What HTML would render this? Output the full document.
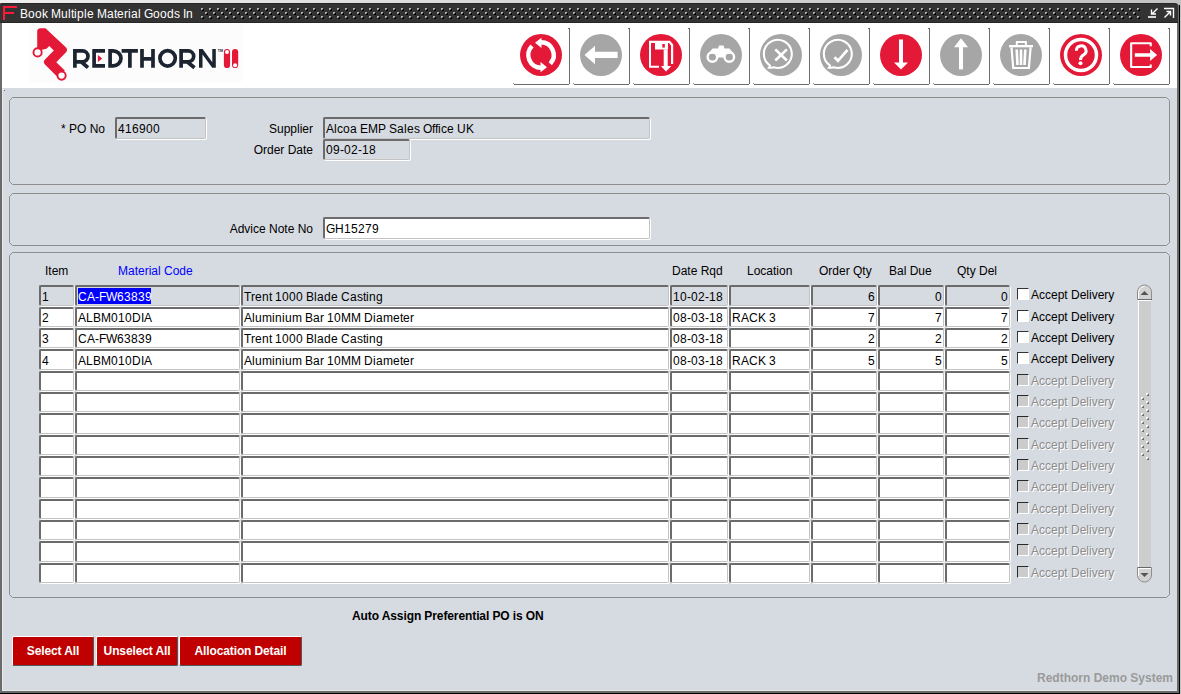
<!DOCTYPE html>
<html><head><meta charset="utf-8"><title>Book Multiple Material Goods In</title><style>
*{margin:0;padding:0;box-sizing:border-box}
html,body{width:1181px;height:694px;overflow:hidden}
body{position:relative;background:#c4c4c4;font-family:"Liberation Sans",sans-serif;font-size:12px;color:#000}
.a{position:absolute}
.t{position:absolute;white-space:nowrap;line-height:14px;height:14px}
.t i{display:inline-block;font-style:normal;overflow:visible}
.cell{position:absolute;border-top:2px solid #6b6b6b;border-left:2px solid #6b6b6b;border-right:1px solid #c3c3c3;border-bottom:1px solid #c3c3c3;border-radius:2px;box-shadow:1px 1px 0 #fff;background:#fff}
.cell.g{background:#d6dae1}
.fld{position:absolute;border-top:2px solid #6b6b6b;border-left:2px solid #6b6b6b;border-right:1px solid #c3c3c3;border-bottom:1px solid #c3c3c3;border-radius:2px;box-shadow:1px 1px 0 #fff;background:#fff}
.fld.g{background:#d6dae1}
.panel{position:absolute;border:1px solid #8e8e8e;border-radius:4px}
.cb{position:absolute;width:12px;height:12px;border-top:1px solid #333;border-left:1px solid #333;border-right:1px solid #fff;border-bottom:1px solid #fff;background:#fff}
.cb.d{background:#cbcbcb;border-top-color:#2a2a2a;border-left-color:#2a2a2a}
.dl{color:#8c8c8c;text-shadow:1px 1px 0 #fff}
.btn{position:absolute;height:30px;background:#c00000;border-top:1px solid #fff;border-left:1px solid #fff;border-right:1px solid #505a5a;border-bottom:1px solid #505a5a;border-radius:2px;color:#fff;font-weight:bold;text-align:center;line-height:29px;letter-spacing:-0.12px}
.tb{position:absolute;top:28px;width:57px;height:57px;border-right:1px solid #8a8a8a;border-bottom:1px solid #707070;border-bottom-right-radius:2px}
</style></head><body>
<div class="a" style="left:0;top:0;width:1181px;height:3px;background:linear-gradient(90deg,#eeeeee,#d6d6d6 50%,#c2c2c2)"></div>
<div class="a" style="left:0;top:3px;width:1179px;height:690px;background:#6a6a6a;border-top-right-radius:4px"></div>
<div class="a" style="left:1179px;top:5px;width:1px;height:689px;background:#000"></div>
<div class="a" style="left:0;top:693px;width:1180px;height:1px;background:#000"></div>
<div class="a" style="left:0;top:3px;width:1178px;height:20px;background:#333;border-top:1px solid #262626;border-bottom:1px solid #262626;border-top-left-radius:3px;border-top-right-radius:4px"></div>
<div class="a" style="left:2px;top:23px;width:1175px;height:668px;background:#d6dae1;border-left:1px solid #e6e8ec;border-bottom:1px solid #e6e8ec"></div>
<div class="a" style="left:2px;top:23px;width:1175px;height:65px;background:#fff"></div>
<svg class="a" style="left:0;top:0" width="1181" height="23"><path d="M3,6 H17 V8 H5 V12 H14 V14 H5 V20 H3 Z" fill="#ff1a3c"/><defs><pattern id="dots" x="1" y="0" width="8" height="8" patternUnits="userSpaceOnUse"><path d="M0,0 h2 v1 h-1 v1 h-1 z" fill="#b4b4b4"/><rect x="1" y="1" width="1" height="1" fill="#6a6a6a"/><path d="M2,1 h1 v2 h-2 v-1 h1 z" fill="#000"/><path d="M4,4 h2 v1 h-1 v1 h-1 z" fill="#b4b4b4"/><rect x="5" y="5" width="1" height="1" fill="#6a6a6a"/><path d="M6,5 h1 v2 h-2 v-1 h1 z" fill="#000"/></pattern></defs><rect x="201" y="8" width="940" height="11" fill="url(#dots)"/><path d="M1148,17 H1156" stroke="#fff" stroke-width="1.6"/><path d="M1157.5,8.5 L1151.5,14.5 M1151.5,9.5 V14 H1156" stroke="#fff" stroke-width="1.4" fill="none"/><path d="M1164,8.5 H1173.5 V18" stroke="#fff" stroke-width="1.4" fill="none"/><path d="M1164.5,17.5 L1170.5,11.5 M1166.5,11.5 H1170.5 V15.5" stroke="#fff" stroke-width="1.4" fill="none"/></svg>
<div class="t " style="left:20px;top:7px;color:#fff"><i style="width:8px">B</i><i style="width:7px">o</i><i style="width:7px">o</i><i style="width:6px">k</i><i style="width:3px">&nbsp;</i><i style="width:10px">M</i><i style="width:7px">u</i><i style="width:3px">l</i><i style="width:3px">t</i><i style="width:3px">i</i><i style="width:7px">p</i><i style="width:3px">l</i><i style="width:7px">e</i><i style="width:3px">&nbsp;</i><i style="width:10px">M</i><i style="width:7px">a</i><i style="width:3px">t</i><i style="width:7px">e</i><i style="width:4px">r</i><i style="width:3px">i</i><i style="width:7px">a</i><i style="width:3px">l</i><i style="width:3px">&nbsp;</i><i style="width:9px">G</i><i style="width:7px">o</i><i style="width:7px">o</i><i style="width:7px">d</i><i style="width:6px">s</i><i style="width:3px">&nbsp;</i><i style="width:3px">I</i><i style="width:7px">n</i></div>
<div class="a" style="left:29px;top:24px;width:213px;height:58px;background:#fcfcfd"></div>
<svg class="a" style="left:0;top:0" width="260" height="88"><path fill="#e31937" d="M37.2,31.5 Q37.2,28.2 40.5,28.2 L45.5,28.2 L65.8,47.2 Q68.3,49.9 65.8,52.6 L56.3,62.2 L64.8,70.6 L58,77.5 L45,64.6 Q42.6,62 45,59.5 L53.8,50.6 L49.3,46 L46.5,48.7 L41,50 L37.2,48 Z"/><circle cx="37.6" cy="52.4" r="4.1" fill="#fff" stroke="#e31937" stroke-width="1.9"/><circle cx="61.6" cy="75.6" r="4.1" fill="#fff" stroke="#e31937" stroke-width="1.9"/><g fill="none" stroke="#1b2430" stroke-width="3.7"><path d="M74.9,49 V67.7 M74.9,50.85 H82.5 A5.5,5.5 0 0 1 82.5,61.85 H74.9 M81.5,62 L88,67.7"/><path d="M94.1,49 V67.7 M92.3,50.85 H105 M92.3,65.85 H105"/><path d="M110.1,49 V67.7 M108.3,50.85 H113.2 A7.8,7.5 0 0 1 113.2,65.85 H108.3"/><path d="M121.6,50.85 H137.9 M129.9,49 V67.7"/><path d="M142,49 V67.7 M153,49 V67.7 M142,58.8 H153"/><circle cx="167.6" cy="58.35" r="7.7"/><path d="M181.1,49 V67.7 M181.1,50.85 H188.2 A5.5,5.5 0 0 1 188.2,61.85 H181.1 M187.5,62 L194.5,67.7"/></g><path fill="#1b2430" d="M199,49 H202.7 L212.3,62.3 V49 H215.8 V67.7 H212.2 L202.5,54.4 V67.7 H199 Z"/><path fill="#e31937" d="M97.9,55 L102.2,58.5 L97.9,62.1 Z"/><text x="217.8" y="51.5" font-family="Liberation Sans" font-weight="bold" font-size="3.6" fill="#1b2430">TM</text><rect x="223.9" y="49" width="6.2" height="19" rx="3.1" fill="#e31937"/><rect x="232" y="49" width="6.2" height="19" rx="3.1" fill="#e31937"/><circle cx="227" cy="51.9" r="2" fill="#fff"/><circle cx="235.1" cy="65.2" r="2" fill="#fff"/></svg>
<svg class="a" style="left:0;top:0" width="1181" height="88"><rect x="569" y="29" width="1" height="55" fill="#6b6b6b"/><rect x="568" y="28" width="2" height="1" fill="#6b6b6b"/><rect x="514" y="84" width="55" height="1" fill="#6b6b6b"/><rect x="513" y="83" width="1" height="1" fill="#8a8a8a"/><rect x="629" y="29" width="1" height="55" fill="#6b6b6b"/><rect x="628" y="28" width="2" height="1" fill="#6b6b6b"/><rect x="574" y="84" width="55" height="1" fill="#6b6b6b"/><rect x="573" y="83" width="1" height="1" fill="#8a8a8a"/><rect x="689" y="29" width="1" height="55" fill="#6b6b6b"/><rect x="688" y="28" width="2" height="1" fill="#6b6b6b"/><rect x="634" y="84" width="55" height="1" fill="#6b6b6b"/><rect x="633" y="83" width="1" height="1" fill="#8a8a8a"/><rect x="749" y="29" width="1" height="55" fill="#6b6b6b"/><rect x="748" y="28" width="2" height="1" fill="#6b6b6b"/><rect x="694" y="84" width="55" height="1" fill="#6b6b6b"/><rect x="693" y="83" width="1" height="1" fill="#8a8a8a"/><rect x="809" y="29" width="1" height="55" fill="#6b6b6b"/><rect x="808" y="28" width="2" height="1" fill="#6b6b6b"/><rect x="754" y="84" width="55" height="1" fill="#6b6b6b"/><rect x="753" y="83" width="1" height="1" fill="#8a8a8a"/><rect x="869" y="29" width="1" height="55" fill="#6b6b6b"/><rect x="868" y="28" width="2" height="1" fill="#6b6b6b"/><rect x="814" y="84" width="55" height="1" fill="#6b6b6b"/><rect x="813" y="83" width="1" height="1" fill="#8a8a8a"/><rect x="929" y="29" width="1" height="55" fill="#6b6b6b"/><rect x="928" y="28" width="2" height="1" fill="#6b6b6b"/><rect x="874" y="84" width="55" height="1" fill="#6b6b6b"/><rect x="873" y="83" width="1" height="1" fill="#8a8a8a"/><rect x="989" y="29" width="1" height="55" fill="#6b6b6b"/><rect x="988" y="28" width="2" height="1" fill="#6b6b6b"/><rect x="934" y="84" width="55" height="1" fill="#6b6b6b"/><rect x="933" y="83" width="1" height="1" fill="#8a8a8a"/><rect x="1049" y="29" width="1" height="55" fill="#6b6b6b"/><rect x="1048" y="28" width="2" height="1" fill="#6b6b6b"/><rect x="994" y="84" width="55" height="1" fill="#6b6b6b"/><rect x="993" y="83" width="1" height="1" fill="#8a8a8a"/><rect x="1109" y="29" width="1" height="55" fill="#6b6b6b"/><rect x="1108" y="28" width="2" height="1" fill="#6b6b6b"/><rect x="1054" y="84" width="55" height="1" fill="#6b6b6b"/><rect x="1053" y="83" width="1" height="1" fill="#8a8a8a"/><rect x="1169" y="29" width="1" height="55" fill="#6b6b6b"/><rect x="1168" y="28" width="2" height="1" fill="#6b6b6b"/><rect x="1114" y="84" width="55" height="1" fill="#6b6b6b"/><rect x="1113" y="83" width="1" height="1" fill="#8a8a8a"/></svg>
<svg class="a" style="left:520px;top:34px" width="42" height="42" viewBox="-21 -21 42 42"><circle r="21" fill="#e31937"/><path d="M0,-12.7 A12.7,12.7 0 0 1 9.29,8.66" stroke="#fff" stroke-width="4.5" fill="none"/><path d="M0.5,-17.3 V-7.1 L-6,-12.2 Z" fill="#fff"/><path d="M-8.98,-8.98 A12.7,12.7 0 0 0 0,12.7" stroke="#fff" stroke-width="4.5" fill="none"/><path d="M-0.5,7.1 V17.3 L6,12.2 Z" fill="#fff"/></svg>
<svg class="a" style="left:580px;top:34px" width="42" height="42" viewBox="-21 -21 42 42"><circle r="21" fill="#a6a6a6"/><path d="M-16.5,0 L-6,-9.3 V-3.3 H16.6 V3 H-6 V9.3 Z" fill="#fff"/></svg>
<svg class="a" style="left:640px;top:34px" width="42" height="42" viewBox="-21 -21 42 42"><circle r="21" fill="#e31937"/><path d="M-12,-14.2 H9 L12.2,-10.6 V9 H10 V-9.6 L8,-12 H-10 V10.8 H-2 V12.8 H-12 Z" fill="#fff"/><path d="M-6,-12 H7 V-5.5 H-6 Z" fill="#fff"/><rect x="1.3" y="-11" width="2.5" height="3.6" fill="#e31937"/><rect x="2.7" y="-5.6" width="4" height="16.8" fill="#fff"/><path d="M-0.1,11 H10.3 L5,16.4 Z" fill="#fff"/></svg>
<svg class="a" style="left:700px;top:34px" width="42" height="42" viewBox="-21 -21 42 42"><circle r="21" fill="#a6a6a6"/><circle cx="-8.6" cy="2" r="4.8" stroke="#fff" stroke-width="2.4" fill="none"/><circle cx="8.3" cy="2" r="4.8" stroke="#fff" stroke-width="2.4" fill="none"/><path d="M-12.5,-1.5 L-8.5,-6.6 H-3 L-2,-9.5 H2.5 L3.5,-6.6 H8.5 L12.5,-1.5 L3,-1 V2.4 H-3 V-1 Z" fill="#fff"/></svg>
<svg class="a" style="left:760px;top:34px" width="42" height="42" viewBox="-21 -21 42 42"><circle r="21" fill="#a6a6a6"/><path d="M-11,10.5 A14,14 0 1 1 -7.5,12.2 Q-10,13 -12,12.7 Q-11,11.5 -11,10.5 Z" stroke="#fff" stroke-width="2.1" fill="none"/><path d="M-5.7,-5.6 L5.9,5.5 M5.9,-5.6 L-5.7,5.5" stroke="#fff" stroke-width="2.6"/></svg>
<svg class="a" style="left:820px;top:34px" width="42" height="42" viewBox="-21 -21 42 42"><circle r="21" fill="#a6a6a6"/><path d="M-11,10.5 A14,14 0 1 1 -7.5,12.2 Q-10,13 -12,12.7 Q-11,11.5 -11,10.5 Z" stroke="#fff" stroke-width="2.1" fill="none"/><path d="M-6.5,2.2 L-3,5.8 L6.5,-5.2" stroke="#fff" stroke-width="2.8" fill="none"/></svg>
<svg class="a" style="left:880px;top:34px" width="42" height="42" viewBox="-21 -21 42 42"><circle r="21" fill="#e31937"/><rect x="-2" y="-15.5" width="4" height="24" fill="#fff"/><path d="M-7,7.5 H7 L0,14.4 Z" fill="#fff"/></svg>
<svg class="a" style="left:940px;top:34px" width="42" height="42" viewBox="-21 -21 42 42"><circle r="21" fill="#a6a6a6"/><rect x="-2" y="-8" width="4" height="22.4" fill="#fff"/><path d="M-7,-7.8 H7 L0,-16.7 Z" fill="#fff"/></svg>
<svg class="a" style="left:1000px;top:34px" width="42" height="42" viewBox="-21 -21 42 42"><circle r="21" fill="#a6a6a6"/><path d="M-4.2,-9 V-13 H4.9 V-9" stroke="#fff" stroke-width="2" fill="none"/><rect x="-12" y="-10" width="24" height="2.3" fill="#fff"/><path d="M-9.5,-7.7 L-7.8,13 H7.9 L9.6,-7.7" stroke="#fff" stroke-width="2.2" fill="none"/><path d="M-4.3,-5.5 L-3.5,10 M0,-5.5 V10 M4.3,-5.5 L3.5,10" stroke="#fff" stroke-width="2.6"/></svg>
<svg class="a" style="left:1060px;top:34px" width="42" height="42" viewBox="-21 -21 42 42"><circle r="21" fill="#e31937"/><circle r="15.5" stroke="#fff" stroke-width="3.5" fill="none"/><path d="M-4.6,-4.2 A4.8,4.8 0 1 1 2.6,-0.2 Q-0.5,1.8 -0.5,5" stroke="#fff" stroke-width="3" fill="none"/><circle cx="-0.5" cy="8.2" r="2" fill="#fff"/></svg>
<svg class="a" style="left:1120px;top:34px" width="42" height="42" viewBox="-21 -21 42 42"><circle r="21" fill="#e31937"/><path d="M9.75,-8.7 V-11.75 H-9.85 V12.05 H9.75 V9.4" stroke="#fff" stroke-width="2.1" stroke-linejoin="round" fill="none"/><path d="M-6.2,-1.7 H9.1 V-5.9 L16.1,0 L9.1,5.9 V1.7 H-6.2 Z" fill="#fff"/></svg>
<div class="a" style="left:3px;top:89px;width:1px;height:1px;background:#fff"></div><div class="a" style="left:4px;top:90px;width:1px;height:1px;background:#666"></div>
<svg class="a" style="left:0;top:0" width="1181" height="694"><path d="M12.5,97.5 H1166.5 L1169.5,100.5 V181.5 L1166.5,184.5 H12.5 L9.5,181.5 V100.5 Z M12.5,193.5 H1166.5 L1169.5,196.5 V242.5 L1166.5,245.5 H12.5 L9.5,242.5 V196.5 Z M12.5,252.5 H1166.5 L1169.5,255.5 V594.5 L1166.5,597.5 H12.5 L9.5,594.5 V255.5 Z" stroke="#8e8e8e" stroke-width="1" fill="none"/></svg>
<div class="t " style="left:61px;top:122px;">* PO No</div>
<div class="fld g" style="left:115px;top:117px;width:91px;height:22px"></div>
<div class="t " style="left:118px;top:122px;"><i style="width:7px">4</i><i style="width:7px">1</i><i style="width:7px">6</i><i style="width:7px">9</i><i style="width:7px">0</i><i style="width:7px">0</i></div>
<div class="t " style="left:268.969px;top:122px;">Supplier</div>
<div class="fld g" style="left:323px;top:117px;width:327px;height:22px"></div>
<div class="t " style="left:326px;top:122px;"><i style="width:8px">A</i><i style="width:3px">l</i><i style="width:6px">c</i><i style="width:7px">o</i><i style="width:7px">a</i><i style="width:3px">&nbsp;</i><i style="width:8px">E</i><i style="width:10px">M</i><i style="width:8px">P</i><i style="width:3px">&nbsp;</i><i style="width:8px">S</i><i style="width:7px">a</i><i style="width:3px">l</i><i style="width:7px">e</i><i style="width:6px">s</i><i style="width:3px">&nbsp;</i><i style="width:9px">O</i><i style="width:3px">f</i><i style="width:3px">f</i><i style="width:3px">i</i><i style="width:6px">c</i><i style="width:7px">e</i><i style="width:3px">&nbsp;</i><i style="width:9px">U</i><i style="width:8px">K</i></div>
<div class="t " style="left:253.656px;top:143px;">Order Date</div>
<div class="fld g" style="left:323px;top:139px;width:87px;height:21px"></div>
<div class="t " style="left:326px;top:143px;"><i style="width:7px">0</i><i style="width:7px">9</i><i style="width:4px">-</i><i style="width:7px">0</i><i style="width:7px">2</i><i style="width:4px">-</i><i style="width:7px">1</i><i style="width:7px">8</i></div>
<div class="t " style="left:229.641px;top:222px;">Advice Note No</div>
<div class="fld" style="left:323px;top:217px;width:327px;height:22px"></div>
<div class="t " style="left:326px;top:222px;"><i style="width:9px">G</i><i style="width:9px">H</i><i style="width:7px">1</i><i style="width:7px">5</i><i style="width:7px">2</i><i style="width:7px">7</i><i style="width:7px">9</i></div>
<div class="t " style="left:45px;top:264px;">Item</div>
<div class="t " style="left:118px;top:264px;color:#0000ff">Material Code</div>
<div class="t " style="left:672px;top:264px;">Date Rqd</div>
<div class="t " style="left:747px;top:264px;">Location</div>
<div class="t " style="left:819px;top:264px;">Order Qty</div>
<div class="t " style="left:889px;top:264px;">Bal Due</div>
<div class="t " style="left:957px;top:264px;">Qty Del</div>
<div class="cell g" style="left:39px;top:285px;width:35px;height:21px"></div>
<div class="t " style="left:42px;top:290px;"><i style="width:7px">1</i></div>
<div class="cell g" style="left:75px;top:285px;width:165px;height:21px"></div>
<div class="a" style="left:78px;top:288px;width:73px;height:16px;background:#0000ff"></div>
<div class="t " style="left:78px;top:290px;color:#fff"><i style="width:9px">C</i><i style="width:8px">A</i><i style="width:4px">-</i><i style="width:7px">F</i><i style="width:11px">W</i><i style="width:7px">6</i><i style="width:7px">3</i><i style="width:7px">8</i><i style="width:7px">3</i><i style="width:7px">9</i></div>
<div class="cell g" style="left:241px;top:285px;width:428px;height:21px"></div>
<div class="t " style="left:244px;top:290px;"><i style="width:7px">T</i><i style="width:4px">r</i><i style="width:7px">e</i><i style="width:7px">n</i><i style="width:3px">t</i><i style="width:3px">&nbsp;</i><i style="width:7px">1</i><i style="width:7px">0</i><i style="width:7px">0</i><i style="width:7px">0</i><i style="width:3px">&nbsp;</i><i style="width:8px">B</i><i style="width:3px">l</i><i style="width:7px">a</i><i style="width:7px">d</i><i style="width:7px">e</i><i style="width:3px">&nbsp;</i><i style="width:9px">C</i><i style="width:7px">a</i><i style="width:6px">s</i><i style="width:3px">t</i><i style="width:3px">i</i><i style="width:7px">n</i><i style="width:7px">g</i></div>
<div class="cell g" style="left:670px;top:285px;width:58px;height:21px"></div>
<div class="t " style="left:673px;top:290px;"><i style="width:7px">1</i><i style="width:7px">0</i><i style="width:4px">-</i><i style="width:7px">0</i><i style="width:7px">2</i><i style="width:4px">-</i><i style="width:7px">1</i><i style="width:7px">8</i></div>
<div class="cell g" style="left:729px;top:285px;width:81px;height:21px"></div>
<div class="cell g" style="left:811px;top:285px;width:66px;height:21px"></div>
<div class="t " style="left:868px;top:290px;"><i style="width:7px">6</i></div>
<div class="cell g" style="left:878px;top:285px;width:66px;height:21px"></div>
<div class="t " style="left:935px;top:290px;"><i style="width:7px">0</i></div>
<div class="cell g" style="left:945px;top:285px;width:65px;height:21px"></div>
<div class="t " style="left:1001px;top:290px;"><i style="width:7px">0</i></div>
<div class="cb" style="left:1017px;top:288px"></div>
<div class="t " style="left:1031px;top:288px;">Accept Delivery</div>
<div class="cell" style="left:39px;top:307px;width:35px;height:20px"></div>
<div class="t " style="left:42px;top:311px;"><i style="width:7px">2</i></div>
<div class="cell" style="left:75px;top:307px;width:165px;height:20px"></div>
<div class="t " style="left:78px;top:311px;"><i style="width:8px">A</i><i style="width:7px">L</i><i style="width:8px">B</i><i style="width:10px">M</i><i style="width:7px">0</i><i style="width:7px">1</i><i style="width:7px">0</i><i style="width:9px">D</i><i style="width:3px">I</i><i style="width:8px">A</i></div>
<div class="cell" style="left:241px;top:307px;width:428px;height:20px"></div>
<div class="t " style="left:244px;top:311px;"><i style="width:8px">A</i><i style="width:3px">l</i><i style="width:7px">u</i><i style="width:10px">m</i><i style="width:3px">i</i><i style="width:7px">n</i><i style="width:3px">i</i><i style="width:7px">u</i><i style="width:10px">m</i><i style="width:3px">&nbsp;</i><i style="width:8px">B</i><i style="width:7px">a</i><i style="width:4px">r</i><i style="width:3px">&nbsp;</i><i style="width:7px">1</i><i style="width:7px">0</i><i style="width:10px">M</i><i style="width:10px">M</i><i style="width:3px">&nbsp;</i><i style="width:9px">D</i><i style="width:3px">i</i><i style="width:7px">a</i><i style="width:10px">m</i><i style="width:7px">e</i><i style="width:3px">t</i><i style="width:7px">e</i><i style="width:4px">r</i></div>
<div class="cell" style="left:670px;top:307px;width:58px;height:20px"></div>
<div class="t " style="left:673px;top:311px;"><i style="width:7px">0</i><i style="width:7px">8</i><i style="width:4px">-</i><i style="width:7px">0</i><i style="width:7px">3</i><i style="width:4px">-</i><i style="width:7px">1</i><i style="width:7px">8</i></div>
<div class="cell" style="left:729px;top:307px;width:81px;height:20px"></div>
<div class="t " style="left:732px;top:311px;"><i style="width:9px">R</i><i style="width:8px">A</i><i style="width:9px">C</i><i style="width:8px">K</i><i style="width:3px">&nbsp;</i><i style="width:7px">3</i></div>
<div class="cell" style="left:811px;top:307px;width:66px;height:20px"></div>
<div class="t " style="left:868px;top:311px;"><i style="width:7px">7</i></div>
<div class="cell" style="left:878px;top:307px;width:66px;height:20px"></div>
<div class="t " style="left:935px;top:311px;"><i style="width:7px">7</i></div>
<div class="cell" style="left:945px;top:307px;width:65px;height:20px"></div>
<div class="t " style="left:1001px;top:311px;"><i style="width:7px">7</i></div>
<div class="cb" style="left:1017px;top:310px"></div>
<div class="t " style="left:1031px;top:310px;">Accept Delivery</div>
<div class="cell" style="left:39px;top:328px;width:35px;height:20px"></div>
<div class="t " style="left:42px;top:332px;"><i style="width:7px">3</i></div>
<div class="cell" style="left:75px;top:328px;width:165px;height:20px"></div>
<div class="t " style="left:78px;top:332px;"><i style="width:9px">C</i><i style="width:8px">A</i><i style="width:4px">-</i><i style="width:7px">F</i><i style="width:11px">W</i><i style="width:7px">6</i><i style="width:7px">3</i><i style="width:7px">8</i><i style="width:7px">3</i><i style="width:7px">9</i></div>
<div class="cell" style="left:241px;top:328px;width:428px;height:20px"></div>
<div class="t " style="left:244px;top:332px;"><i style="width:7px">T</i><i style="width:4px">r</i><i style="width:7px">e</i><i style="width:7px">n</i><i style="width:3px">t</i><i style="width:3px">&nbsp;</i><i style="width:7px">1</i><i style="width:7px">0</i><i style="width:7px">0</i><i style="width:7px">0</i><i style="width:3px">&nbsp;</i><i style="width:8px">B</i><i style="width:3px">l</i><i style="width:7px">a</i><i style="width:7px">d</i><i style="width:7px">e</i><i style="width:3px">&nbsp;</i><i style="width:9px">C</i><i style="width:7px">a</i><i style="width:6px">s</i><i style="width:3px">t</i><i style="width:3px">i</i><i style="width:7px">n</i><i style="width:7px">g</i></div>
<div class="cell" style="left:670px;top:328px;width:58px;height:20px"></div>
<div class="t " style="left:673px;top:332px;"><i style="width:7px">0</i><i style="width:7px">8</i><i style="width:4px">-</i><i style="width:7px">0</i><i style="width:7px">3</i><i style="width:4px">-</i><i style="width:7px">1</i><i style="width:7px">8</i></div>
<div class="cell" style="left:729px;top:328px;width:81px;height:20px"></div>
<div class="cell" style="left:811px;top:328px;width:66px;height:20px"></div>
<div class="t " style="left:868px;top:332px;"><i style="width:7px">2</i></div>
<div class="cell" style="left:878px;top:328px;width:66px;height:20px"></div>
<div class="t " style="left:935px;top:332px;"><i style="width:7px">2</i></div>
<div class="cell" style="left:945px;top:328px;width:65px;height:20px"></div>
<div class="t " style="left:1001px;top:332px;"><i style="width:7px">2</i></div>
<div class="cb" style="left:1017px;top:331px"></div>
<div class="t " style="left:1031px;top:331px;">Accept Delivery</div>
<div class="cell" style="left:39px;top:349px;width:35px;height:21px"></div>
<div class="t " style="left:42px;top:354px;"><i style="width:7px">4</i></div>
<div class="cell" style="left:75px;top:349px;width:165px;height:21px"></div>
<div class="t " style="left:78px;top:354px;"><i style="width:8px">A</i><i style="width:7px">L</i><i style="width:8px">B</i><i style="width:10px">M</i><i style="width:7px">0</i><i style="width:7px">1</i><i style="width:7px">0</i><i style="width:9px">D</i><i style="width:3px">I</i><i style="width:8px">A</i></div>
<div class="cell" style="left:241px;top:349px;width:428px;height:21px"></div>
<div class="t " style="left:244px;top:354px;"><i style="width:8px">A</i><i style="width:3px">l</i><i style="width:7px">u</i><i style="width:10px">m</i><i style="width:3px">i</i><i style="width:7px">n</i><i style="width:3px">i</i><i style="width:7px">u</i><i style="width:10px">m</i><i style="width:3px">&nbsp;</i><i style="width:8px">B</i><i style="width:7px">a</i><i style="width:4px">r</i><i style="width:3px">&nbsp;</i><i style="width:7px">1</i><i style="width:7px">0</i><i style="width:10px">M</i><i style="width:10px">M</i><i style="width:3px">&nbsp;</i><i style="width:9px">D</i><i style="width:3px">i</i><i style="width:7px">a</i><i style="width:10px">m</i><i style="width:7px">e</i><i style="width:3px">t</i><i style="width:7px">e</i><i style="width:4px">r</i></div>
<div class="cell" style="left:670px;top:349px;width:58px;height:21px"></div>
<div class="t " style="left:673px;top:354px;"><i style="width:7px">0</i><i style="width:7px">8</i><i style="width:4px">-</i><i style="width:7px">0</i><i style="width:7px">3</i><i style="width:4px">-</i><i style="width:7px">1</i><i style="width:7px">8</i></div>
<div class="cell" style="left:729px;top:349px;width:81px;height:21px"></div>
<div class="t " style="left:732px;top:354px;"><i style="width:9px">R</i><i style="width:8px">A</i><i style="width:9px">C</i><i style="width:8px">K</i><i style="width:3px">&nbsp;</i><i style="width:7px">3</i></div>
<div class="cell" style="left:811px;top:349px;width:66px;height:21px"></div>
<div class="t " style="left:868px;top:354px;"><i style="width:7px">5</i></div>
<div class="cell" style="left:878px;top:349px;width:66px;height:21px"></div>
<div class="t " style="left:935px;top:354px;"><i style="width:7px">5</i></div>
<div class="cell" style="left:945px;top:349px;width:65px;height:21px"></div>
<div class="t " style="left:1001px;top:354px;"><i style="width:7px">5</i></div>
<div class="cb" style="left:1017px;top:352px"></div>
<div class="t " style="left:1031px;top:352px;">Accept Delivery</div>
<div class="cell" style="left:39px;top:371px;width:35px;height:20px"></div>
<div class="cell" style="left:75px;top:371px;width:165px;height:20px"></div>
<div class="cell" style="left:241px;top:371px;width:428px;height:20px"></div>
<div class="cell" style="left:670px;top:371px;width:58px;height:20px"></div>
<div class="cell" style="left:729px;top:371px;width:81px;height:20px"></div>
<div class="cell" style="left:811px;top:371px;width:66px;height:20px"></div>
<div class="cell" style="left:878px;top:371px;width:66px;height:20px"></div>
<div class="cell" style="left:945px;top:371px;width:65px;height:20px"></div>
<div class="cb d" style="left:1017px;top:374px"></div>
<div class="t dl" style="left:1031px;top:374px;">Accept Delivery</div>
<div class="cell" style="left:39px;top:392px;width:35px;height:20px"></div>
<div class="cell" style="left:75px;top:392px;width:165px;height:20px"></div>
<div class="cell" style="left:241px;top:392px;width:428px;height:20px"></div>
<div class="cell" style="left:670px;top:392px;width:58px;height:20px"></div>
<div class="cell" style="left:729px;top:392px;width:81px;height:20px"></div>
<div class="cell" style="left:811px;top:392px;width:66px;height:20px"></div>
<div class="cell" style="left:878px;top:392px;width:66px;height:20px"></div>
<div class="cell" style="left:945px;top:392px;width:65px;height:20px"></div>
<div class="cb d" style="left:1017px;top:395px"></div>
<div class="t dl" style="left:1031px;top:395px;">Accept Delivery</div>
<div class="cell" style="left:39px;top:413px;width:35px;height:21px"></div>
<div class="cell" style="left:75px;top:413px;width:165px;height:21px"></div>
<div class="cell" style="left:241px;top:413px;width:428px;height:21px"></div>
<div class="cell" style="left:670px;top:413px;width:58px;height:21px"></div>
<div class="cell" style="left:729px;top:413px;width:81px;height:21px"></div>
<div class="cell" style="left:811px;top:413px;width:66px;height:21px"></div>
<div class="cell" style="left:878px;top:413px;width:66px;height:21px"></div>
<div class="cell" style="left:945px;top:413px;width:65px;height:21px"></div>
<div class="cb d" style="left:1017px;top:416px"></div>
<div class="t dl" style="left:1031px;top:416px;">Accept Delivery</div>
<div class="cell" style="left:39px;top:435px;width:35px;height:20px"></div>
<div class="cell" style="left:75px;top:435px;width:165px;height:20px"></div>
<div class="cell" style="left:241px;top:435px;width:428px;height:20px"></div>
<div class="cell" style="left:670px;top:435px;width:58px;height:20px"></div>
<div class="cell" style="left:729px;top:435px;width:81px;height:20px"></div>
<div class="cell" style="left:811px;top:435px;width:66px;height:20px"></div>
<div class="cell" style="left:878px;top:435px;width:66px;height:20px"></div>
<div class="cell" style="left:945px;top:435px;width:65px;height:20px"></div>
<div class="cb d" style="left:1017px;top:438px"></div>
<div class="t dl" style="left:1031px;top:438px;">Accept Delivery</div>
<div class="cell" style="left:39px;top:456px;width:35px;height:20px"></div>
<div class="cell" style="left:75px;top:456px;width:165px;height:20px"></div>
<div class="cell" style="left:241px;top:456px;width:428px;height:20px"></div>
<div class="cell" style="left:670px;top:456px;width:58px;height:20px"></div>
<div class="cell" style="left:729px;top:456px;width:81px;height:20px"></div>
<div class="cell" style="left:811px;top:456px;width:66px;height:20px"></div>
<div class="cell" style="left:878px;top:456px;width:66px;height:20px"></div>
<div class="cell" style="left:945px;top:456px;width:65px;height:20px"></div>
<div class="cb d" style="left:1017px;top:459px"></div>
<div class="t dl" style="left:1031px;top:459px;">Accept Delivery</div>
<div class="cell" style="left:39px;top:477px;width:35px;height:21px"></div>
<div class="cell" style="left:75px;top:477px;width:165px;height:21px"></div>
<div class="cell" style="left:241px;top:477px;width:428px;height:21px"></div>
<div class="cell" style="left:670px;top:477px;width:58px;height:21px"></div>
<div class="cell" style="left:729px;top:477px;width:81px;height:21px"></div>
<div class="cell" style="left:811px;top:477px;width:66px;height:21px"></div>
<div class="cell" style="left:878px;top:477px;width:66px;height:21px"></div>
<div class="cell" style="left:945px;top:477px;width:65px;height:21px"></div>
<div class="cb d" style="left:1017px;top:480px"></div>
<div class="t dl" style="left:1031px;top:480px;">Accept Delivery</div>
<div class="cell" style="left:39px;top:499px;width:35px;height:20px"></div>
<div class="cell" style="left:75px;top:499px;width:165px;height:20px"></div>
<div class="cell" style="left:241px;top:499px;width:428px;height:20px"></div>
<div class="cell" style="left:670px;top:499px;width:58px;height:20px"></div>
<div class="cell" style="left:729px;top:499px;width:81px;height:20px"></div>
<div class="cell" style="left:811px;top:499px;width:66px;height:20px"></div>
<div class="cell" style="left:878px;top:499px;width:66px;height:20px"></div>
<div class="cell" style="left:945px;top:499px;width:65px;height:20px"></div>
<div class="cb d" style="left:1017px;top:502px"></div>
<div class="t dl" style="left:1031px;top:502px;">Accept Delivery</div>
<div class="cell" style="left:39px;top:520px;width:35px;height:20px"></div>
<div class="cell" style="left:75px;top:520px;width:165px;height:20px"></div>
<div class="cell" style="left:241px;top:520px;width:428px;height:20px"></div>
<div class="cell" style="left:670px;top:520px;width:58px;height:20px"></div>
<div class="cell" style="left:729px;top:520px;width:81px;height:20px"></div>
<div class="cell" style="left:811px;top:520px;width:66px;height:20px"></div>
<div class="cell" style="left:878px;top:520px;width:66px;height:20px"></div>
<div class="cell" style="left:945px;top:520px;width:65px;height:20px"></div>
<div class="cb d" style="left:1017px;top:523px"></div>
<div class="t dl" style="left:1031px;top:523px;">Accept Delivery</div>
<div class="cell" style="left:39px;top:541px;width:35px;height:21px"></div>
<div class="cell" style="left:75px;top:541px;width:165px;height:21px"></div>
<div class="cell" style="left:241px;top:541px;width:428px;height:21px"></div>
<div class="cell" style="left:670px;top:541px;width:58px;height:21px"></div>
<div class="cell" style="left:729px;top:541px;width:81px;height:21px"></div>
<div class="cell" style="left:811px;top:541px;width:66px;height:21px"></div>
<div class="cell" style="left:878px;top:541px;width:66px;height:21px"></div>
<div class="cell" style="left:945px;top:541px;width:65px;height:21px"></div>
<div class="cb d" style="left:1017px;top:544px"></div>
<div class="t dl" style="left:1031px;top:544px;">Accept Delivery</div>
<div class="cell" style="left:39px;top:563px;width:35px;height:20px"></div>
<div class="cell" style="left:75px;top:563px;width:165px;height:20px"></div>
<div class="cell" style="left:241px;top:563px;width:428px;height:20px"></div>
<div class="cell" style="left:670px;top:563px;width:58px;height:20px"></div>
<div class="cell" style="left:729px;top:563px;width:81px;height:20px"></div>
<div class="cell" style="left:811px;top:563px;width:66px;height:20px"></div>
<div class="cell" style="left:878px;top:563px;width:66px;height:20px"></div>
<div class="cell" style="left:945px;top:563px;width:65px;height:20px"></div>
<div class="cb d" style="left:1017px;top:566px"></div>
<div class="t dl" style="left:1031px;top:566px;">Accept Delivery</div>
<div class="a" style="left:1138px;top:299px;width:13px;height:269px;background:#cdcdcd;border-left:1px solid #fff"></div>
<svg class="a" style="left:1136px;top:284px" width="17" height="300"><path d="M1.5,15.5 V8 A7,7 0 0 1 15.5,8 V15.5 Z" fill="#d2d2d2" stroke="#8e8e8e" stroke-width="1"/><path d="M2.5,15 V8.5 A6,6 0 0 1 8.5,2.5" stroke="#fff" stroke-width="1" fill="none"/><path d="M4.5,11 L8.5,7 L12.5,11 Z" fill="#555"/><rect x="2" y="15" width="14" height="1" fill="#6a6a6a"/><rect x="3" y="16" width="12" height="1" fill="#fff"/><path d="M1.5,283.5 V291 A7,7 0 0 0 15.5,291 V283.5 Z" fill="#d2d2d2" stroke="#8e8e8e" stroke-width="1"/><rect x="2" y="283" width="13" height="1" fill="#666"/><rect x="2" y="284" width="13" height="1" fill="#fff"/><rect x="2" y="284" width="1" height="8" fill="#fff"/><path d="M4.5,289 L8.5,293 L12.5,289 Z" fill="#555"/></svg>
<svg class="a" style="left:0;top:0" width="1181" height="694"><path d="M1146,393 h2 v1 h-1 v1 h-1 z" fill="#fff"/><path d="M1148,394 h1 v2 h-2 v-1 h1 z" fill="#6e6e6e"/><path d="M1146,401 h2 v1 h-1 v1 h-1 z" fill="#fff"/><path d="M1148,402 h1 v2 h-2 v-1 h1 z" fill="#6e6e6e"/><path d="M1146,409 h2 v1 h-1 v1 h-1 z" fill="#fff"/><path d="M1148,410 h1 v2 h-2 v-1 h1 z" fill="#6e6e6e"/><path d="M1146,417 h2 v1 h-1 v1 h-1 z" fill="#fff"/><path d="M1148,418 h1 v2 h-2 v-1 h1 z" fill="#6e6e6e"/><path d="M1146,425 h2 v1 h-1 v1 h-1 z" fill="#fff"/><path d="M1148,426 h1 v2 h-2 v-1 h1 z" fill="#6e6e6e"/><path d="M1146,433 h2 v1 h-1 v1 h-1 z" fill="#fff"/><path d="M1148,434 h1 v2 h-2 v-1 h1 z" fill="#6e6e6e"/><path d="M1146,441 h2 v1 h-1 v1 h-1 z" fill="#fff"/><path d="M1148,442 h1 v2 h-2 v-1 h1 z" fill="#6e6e6e"/><path d="M1146,449 h2 v1 h-1 v1 h-1 z" fill="#fff"/><path d="M1148,450 h1 v2 h-2 v-1 h1 z" fill="#6e6e6e"/><path d="M1146,457 h2 v1 h-1 v1 h-1 z" fill="#fff"/><path d="M1148,458 h1 v2 h-2 v-1 h1 z" fill="#6e6e6e"/><path d="M1141,397 h2 v1 h-1 v1 h-1 z" fill="#fff"/><path d="M1143,398 h1 v2 h-2 v-1 h1 z" fill="#6e6e6e"/><path d="M1141,405 h2 v1 h-1 v1 h-1 z" fill="#fff"/><path d="M1143,406 h1 v2 h-2 v-1 h1 z" fill="#6e6e6e"/><path d="M1141,413 h2 v1 h-1 v1 h-1 z" fill="#fff"/><path d="M1143,414 h1 v2 h-2 v-1 h1 z" fill="#6e6e6e"/><path d="M1141,421 h2 v1 h-1 v1 h-1 z" fill="#fff"/><path d="M1143,422 h1 v2 h-2 v-1 h1 z" fill="#6e6e6e"/><path d="M1141,429 h2 v1 h-1 v1 h-1 z" fill="#fff"/><path d="M1143,430 h1 v2 h-2 v-1 h1 z" fill="#6e6e6e"/><path d="M1141,437 h2 v1 h-1 v1 h-1 z" fill="#fff"/><path d="M1143,438 h1 v2 h-2 v-1 h1 z" fill="#6e6e6e"/><path d="M1141,445 h2 v1 h-1 v1 h-1 z" fill="#fff"/><path d="M1143,446 h1 v2 h-2 v-1 h1 z" fill="#6e6e6e"/><path d="M1141,453 h2 v1 h-1 v1 h-1 z" fill="#fff"/><path d="M1143,454 h1 v2 h-2 v-1 h1 z" fill="#6e6e6e"/></svg>
<div class="t" style="left:352px;top:609px;font-weight:bold;letter-spacing:-0.1px">Auto Assign Preferential PO is ON</div>
<div class="btn" style="left:12px;top:636px;width:82px">Select All</div>
<div class="btn" style="left:96px;top:636px;width:82px">Unselect All</div>
<div class="btn" style="left:179px;top:636px;width:123px">Allocation Detail</div>
<div class="t" style="left:1037px;top:671px;font-weight:bold;color:#9a9a9a">Redthorn Demo System</div>
</body></html>
